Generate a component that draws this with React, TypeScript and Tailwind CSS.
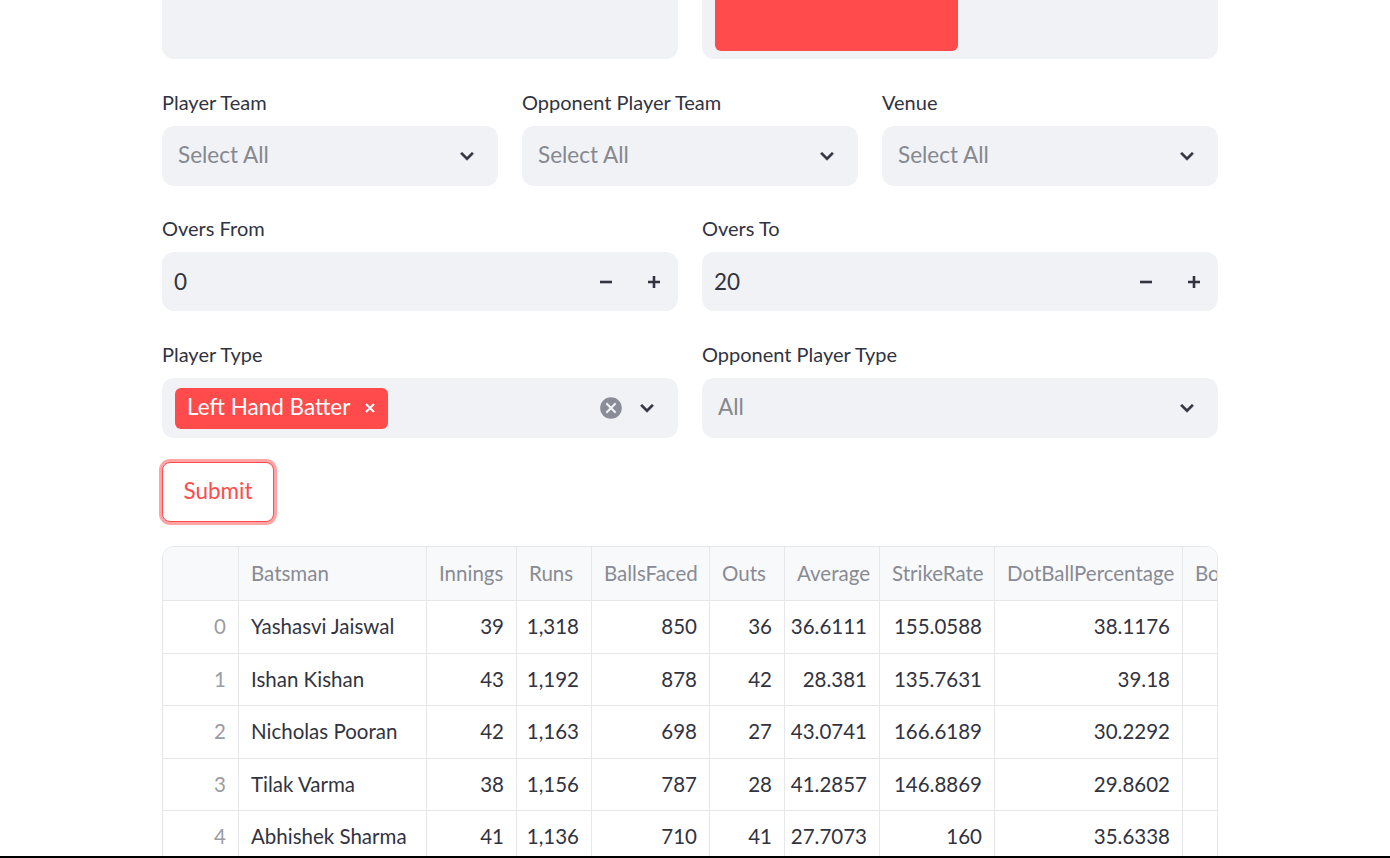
type Row = {
  idx: number;
  name: string;
  innings: string;
  runs: string;
  balls: string;
  outs: string;
  avg: string;
  sr: string;
  dot: string;
};

const rows: Row[] = [
  { idx: 0, name: 'Yashasvi Jaiswal', innings: '39', runs: '1,318', balls: '850', outs: '36', avg: '36.6111', sr: '155.0588', dot: '38.1176' },
  { idx: 1, name: 'Ishan Kishan', innings: '43', runs: '1,192', balls: '878', outs: '42', avg: '28.381', sr: '135.7631', dot: '39.18' },
  { idx: 2, name: 'Nicholas Pooran', innings: '42', runs: '1,163', balls: '698', outs: '27', avg: '43.0741', sr: '166.6189', dot: '30.2292' },
  { idx: 3, name: 'Tilak Varma', innings: '38', runs: '1,156', balls: '787', outs: '28', avg: '41.2857', sr: '146.8869', dot: '29.8602' },
  { idx: 4, name: 'Abhishek Sharma', innings: '41', runs: '1,136', balls: '710', outs: '41', avg: '27.7073', sr: '160', dot: '35.6338' },
];

function Chevron() {
  return (
    <svg viewBox="0 0 24 24" width="26" height="26" fill="#31333f">
      <path d="M16.59 8.59L12 13.17 7.41 8.59 6 10l6 6 6-6z" stroke="#31333f" strokeWidth="0.6" />
    </svg>
  );
}

function Field({ label, children }: { label: string; children: React.ReactNode }) {
  return (
    <div className="flex flex-col">
      <div className="mb-3 h-6 text-[20px] leading-6 text-[#31333f]">{label}</div>
      {children}
    </div>
  );
}

function SelectBox({ placeholder }: { placeholder: string }) {
  return (
    <div className="flex h-[60px] items-center justify-between rounded-xl bg-[#f0f2f6] pl-4 pr-[18px]">
      <span className="-mt-0.5 text-[22.5px] text-[#86888f]">{placeholder}</span>
      <Chevron />
    </div>
  );
}

function NumberBox({ value }: { value: string }) {
  return (
    <div className="flex h-[59px] items-center justify-between rounded-xl bg-[#f0f2f6] pl-3">
      <span className="text-[22.5px] text-[#31333f]">{value}</span>
      <div className="flex h-full items-center">
        <div className="flex h-full w-12 items-center justify-center">
          <svg width="14" height="14" viewBox="0 0 14 14"><path d="M1 7h12" stroke="#31333f" strokeWidth="2.6" /></svg>
        </div>
        <div className="flex h-full w-12 items-center justify-center">
          <svg width="14" height="14" viewBox="0 0 14 14"><path d="M1 7h12M7 1v12" stroke="#31333f" strokeWidth="2.6" /></svg>
        </div>
      </div>
    </div>
  );
}

const cols = [
  { key: 'idx', title: '', w: 'w-[75px]', right: true },
  { key: 'name', title: 'Batsman', w: 'w-[188px]', right: false },
  { key: 'innings', title: 'Innings', w: 'w-[90px]', right: true },
  { key: 'runs', title: 'Runs', w: 'w-[75px]', right: true },
  { key: 'balls', title: 'BallsFaced', w: 'w-[118px]', right: true },
  { key: 'outs', title: 'Outs', w: 'w-[75px]', right: true },
  { key: 'avg', title: 'Average', w: 'w-[95px]', right: true },
  { key: 'sr', title: 'StrikeRate', w: 'w-[115px]', right: true },
  { key: 'dot', title: 'DotBallPercentage', w: 'w-[188px]', right: true },
  { key: 'bo', title: 'Boundaries', w: 'w-[120px]', right: true },
] as const;

export default function App() {
  return (
    <div className="flex h-[858px] flex-col overflow-hidden bg-white font-['Lato',sans-serif] text-[#31333f]">
      <div className="flex-1 overflow-hidden">
        <div className="ml-[162px] w-[1056px]">
          {/* partially scrolled-off row */}
          <div className="grid grid-cols-2 gap-6">
            <div className="h-[59px] rounded-b-xl bg-[#f0f2f6]" />
            <div className="flex h-[59px] items-end rounded-b-xl bg-[#f0f2f6] px-[13px] pb-2">
              <div className="h-[51px] w-[243px] rounded-b-md bg-[#ff4b4b]" />
            </div>
          </div>

          <div className="mt-[31px] grid grid-cols-3 gap-6">
            <Field label="Player Team"><SelectBox placeholder="Select All" /></Field>
            <Field label="Opponent Player Team"><SelectBox placeholder="Select All" /></Field>
            <Field label="Venue"><SelectBox placeholder="Select All" /></Field>
          </div>

          <div className="mt-[30px] grid grid-cols-2 gap-6">
            <Field label="Overs From"><NumberBox value="0" /></Field>
            <Field label="Overs To"><NumberBox value="20" /></Field>
          </div>

          <div className="mt-[31px] grid grid-cols-2 gap-6">
            <Field label="Player Type">
              <div className="flex h-[60px] items-center justify-between rounded-xl bg-[#f0f2f6] pl-[13px] pr-[18px]">
                <div className="flex h-[41px] items-center gap-3.5 rounded-md bg-[#ff4b4b] pl-3 pr-3 text-[22.5px] text-white">
                  <span className="-mt-0.5">Left Hand Batter</span>
                  <svg width="12" height="12" viewBox="0 0 12 12"><path d="M2 2l8 8M10 2l-8 8" stroke="#fff" strokeWidth="2" /></svg>
                </div>
                <div className="flex items-center gap-2.5">
                  <svg viewBox="0 0 24 24" width="26" height="26" fill="#8a8c97">
                    <path d="M12 2C6.47 2 2 6.47 2 12s4.47 10 10 10 10-4.47 10-10S17.53 2 12 2zm5 13.59L15.59 17 12 13.41 8.41 17 7 15.59 10.59 12 7 8.41 8.41 7 12 10.59 15.59 7 17 8.41 13.41 12 17 15.59z" />
                  </svg>
                  <Chevron />
                </div>
              </div>
            </Field>
            <Field label="Opponent Player Type"><SelectBox placeholder="All" /></Field>
          </div>

          <button className="mt-6 flex h-[60px] w-[112px] items-center justify-center rounded-lg border border-[#ff4b4b] bg-white pb-0.5 text-[22.5px] text-[#ff4b4b] shadow-[0_0_0_3px_rgba(255,75,75,0.5)]">
            Submit
          </button>

          <div className="mt-6 overflow-hidden rounded-t-xl border border-[#e6e7eb] text-[20.5px]">
            <div className="flex h-[53px] bg-[#f8f9fb] text-[#888b94]">
              {cols.map((c, i) => (
                <div key={c.key} className={`${c.w} flex shrink-0 items-center whitespace-nowrap px-3 ${i > 0 ? 'border-l border-[#e6e7eb]' : ''}`}>
                  {c.title}
                </div>
              ))}
            </div>
            {rows.map((r) => (
              <div key={r.idx} className="flex h-[52.5px] border-t border-[#e6e7eb]">
                {cols.map((c, i) => {
                  const v = c.key === 'bo' ? '' : String(r[c.key as keyof Row]);
                  return (
                    <div
                      key={c.key}
                      className={`${c.w} flex shrink-0 items-center px-3 ${c.right ? 'justify-end' : ''} ${i > 0 ? 'border-l border-[#e6e7eb]' : ''} ${c.key === 'idx' ? 'text-[#9a9ca4]' : 'text-[#31333f]'}`}
                    >
                      {v}
                    </div>
                  );
                })}
              </div>
            ))}
          </div>
        </div>
      </div>
      <div className="h-[2px] shrink-0 bg-black" />
    </div>
  );
}
